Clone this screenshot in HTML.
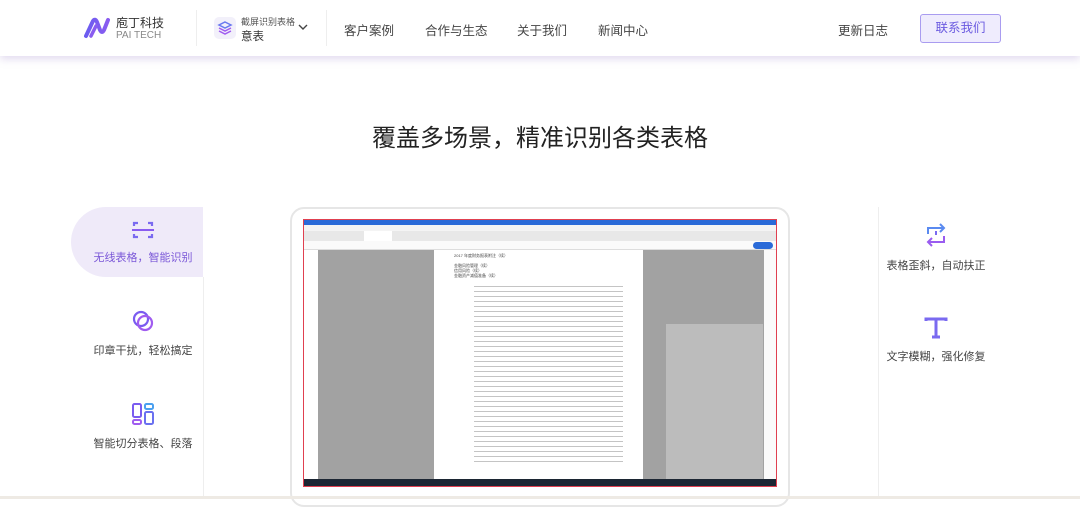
<!DOCTYPE html>
<html><head><meta charset="utf-8"><style>
*{margin:0;padding:0;box-sizing:border-box}
body{width:1080px;height:499px;overflow:hidden;background:#fff;font-family:"Liberation Sans","Noto Sans CJK SC",sans-serif;position:relative;color:#333}
.hdr{position:absolute;left:0;top:0;width:1080px;height:56px;background:#fff;box-shadow:0 3px 8px rgba(170,150,210,.35)}
.a{position:absolute}
.nav{font-size:12.5px;color:#444;top:20px}
.feat{position:absolute;text-align:center;font-size:11px;color:#444;width:140px}
.feat svg{display:block;margin:0 auto 9px}
</style></head><body>
<div class="hdr">
 <svg class="a" style="left:83px;top:16px" width="28" height="24" viewBox="0 0 28 24"><defs><linearGradient id="lg" x1="0" x2="1"><stop offset="0" stop-color="#6b5cf0"/><stop offset="1" stop-color="#8a5cf0"/></linearGradient></defs><path d="M3 20 L10 5 Q12 2 14 6 L17 14 Q19 18 21 14 L25 4" stroke="url(#lg)" stroke-width="4" fill="none" stroke-linecap="round"/><path d="M8 20 L13 10" stroke="#8a5cf0" stroke-width="3.5" stroke-linecap="round"/></svg>
 <div class="a" style="left:116px;top:14px;font-size:12px;color:#333">庖丁科技</div>
 <div class="a" style="left:116px;top:30px;font-size:10px;color:#888">PAI TECH</div>
 <div class="a" style="left:196px;top:10px;width:1px;height:36px;background:#eee"></div>
 <div class="a" style="left:214px;top:17px;width:22px;height:22px;border-radius:5px;background:#f2f0fa"></div>
 <svg class="a" style="left:217px;top:20px" width="16" height="16" viewBox="0 0 16 16"><path d="M8 2 L14 5 L8 8 L2 5Z" fill="none" stroke="#6a7af0" stroke-width="1.5"/><path d="M2 8 L8 11 L14 8 M2 11 L8 14 L14 11" fill="none" stroke="#a05cf0" stroke-width="1.5"/></svg>
 <div class="a" style="left:241px;top:15px;font-size:9px;color:#555">截屏识别表格</div>
 <div class="a" style="left:241px;top:28px;font-size:11.5px;color:#333">意表</div>
 <svg class="a" style="left:298px;top:24px" width="10" height="7"><path d="M1 1 L5 5 L9 1" stroke="#444" stroke-width="1.4" fill="none"/></svg>
 <div class="a" style="left:326px;top:10px;width:1px;height:36px;background:#eee"></div>
 <div class="a nav" style="left:344px">客户案例</div>
 <div class="a nav" style="left:425px">合作与生态</div>
 <div class="a nav" style="left:517px">关于我们</div>
 <div class="a nav" style="left:598px">新闻中心</div>
 <div class="a nav" style="left:838px">更新日志</div>
 <div class="a" style="left:920px;top:14px;width:81px;height:29px;border:1px solid #a99cf0;border-radius:3px;background:#efecfd;color:#6a5ae0;font-size:12.5px;text-align:center;line-height:27px">联系我们</div>
</div>
<div class="a" style="left:0;top:118px;width:1080px;text-align:center;font-size:24px;color:#222">覆盖多场景，精准识别各类表格</div>

<div class="a" style="left:71px;top:207px;width:132px;height:70px;background:#efeaf9;border-radius:35px 0 0 35px"></div>
<div class="a" style="left:203px;top:277px;width:1px;height:222px;background:#eee"></div>
<div class="a" style="left:878px;top:207px;width:1px;height:292px;background:#eee"></div>
<div class="feat" style="left:73px;top:220px;color:#7b58d8"><svg width="24" height="20" viewBox="0 0 24 20"><path d="M3 6V3H7M17 3H21V6M3 14V17H7M17 17H21V14" stroke="#7a6af0" stroke-width="2.2" fill="none"/><path d="M1 10H23" stroke="#8a5cf0" stroke-width="2"/></svg>无线表格，智能识别</div>
<div class="feat" style="left:73px;top:309px"><svg width="24" height="24" viewBox="0 0 24 24"><circle cx="10" cy="10" r="7" stroke="#7a5cf0" stroke-width="2.2" fill="none"/><circle cx="14" cy="14" r="7" stroke="#a05cf0" stroke-width="2.2" fill="none"/></svg>印章干扰，轻松搞定</div>
<div class="feat" style="left:73px;top:402px"><svg width="24" height="24" viewBox="0 0 24 24"><rect x="2" y="2" width="8" height="13" rx="1.5" stroke="#7a5cf0" stroke-width="2" fill="none"/><rect x="14" y="2" width="8" height="5" rx="1.5" stroke="#4aa0f0" stroke-width="2" fill="none"/><rect x="2" y="18" width="8" height="4" rx="1.5" stroke="#a05cf0" stroke-width="2" fill="none"/><rect x="14" y="10" width="8" height="12" rx="1.5" stroke="#6a70f0" stroke-width="2" fill="none"/></svg>智能切分表格、段落</div>
<div class="feat" style="left:866px;top:222px"><svg width="22" height="26" viewBox="0 0 22 26"><path d="M3 12V6H19M15 2L19 6L15 10" stroke="#5a8af0" stroke-width="2" fill="none"/><path d="M19 14V20H3M7 16L3 20L7 24" stroke="#9a5cf0" stroke-width="2" fill="none"/><path d="M11 9V13" stroke="#7a6af0" stroke-width="2"/></svg>表格歪斜，自动扶正</div>
<div class="feat" style="left:866px;top:317px"><svg width="24" height="22" viewBox="0 0 24 22"><path d="M2 4V2H22V4M12 2V20M8 20H16" stroke="#7a6af0" stroke-width="3" fill="none"/></svg>文字模糊，强化修复</div>

<div class="a" style="left:290px;top:207px;width:500px;height:300px;border:2px solid #e6e6e6;border-radius:14px;background:#fff"></div>
<div class="a" style="left:303px;top:219px;width:474px;height:268px;border:1px solid #e04050;background:#fff;overflow:hidden">
 <div class="a" style="left:0;top:0;width:474px;height:5px;background:#2a6ad8"></div>
 <div class="a" style="left:0;top:5px;width:474px;height:6px;background:#f4f4f4"></div>
 <div class="a" style="left:0;top:11px;width:474px;height:10px;background:#e8e8e8"></div>
 <div class="a" style="left:60px;top:11px;width:28px;height:10px;background:#fff"></div>
 <div class="a" style="left:0;top:21px;width:474px;height:9px;background:#fafafa;border-bottom:1px solid #ddd"></div>
 <div class="a" style="left:449px;top:22px;width:20px;height:7px;background:#2a6ad8;border-radius:4px"></div>
 <div class="a" style="left:14px;top:30px;width:116px;height:229px;background:#a2a2a2"></div>
 <div class="a" style="left:130px;top:30px;width:209px;height:229px;background:#fff;font-size:4px;color:#444;line-height:5px;padding:3px 20px">
  2017 年度财务报表附注（续）<br><br>金融风险管理（续）<br>信用风险（续）<br>金融资产减值准备（续）<br><br>
  <div style="height:180px;background:repeating-linear-gradient(#fff 0 3px,#c4c4c4 3px 4px,#fff 4px 5px);margin-left:20px"></div>
 </div>
 <div class="a" style="left:339px;top:30px;width:121px;height:229px;background:#a2a2a2"></div>
 <div class="a" style="left:362px;top:104px;width:97px;height:155px;background:#bcbcbc"></div>
 <div class="a" style="left:460px;top:30px;width:14px;height:229px;background:#fafafa"></div>
 <div class="a" style="left:0;top:259px;width:474px;height:9px;background:#1c2633"></div>
</div>
<div class="a" style="left:0;top:496px;width:1080px;height:3px;background:#eeeae4"></div>
</body></html>
